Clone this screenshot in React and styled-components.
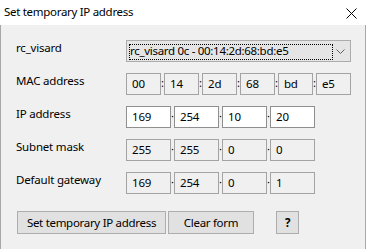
import React from "react";
import styled, { createGlobalStyle } from "styled-components";

const FONT = `"Noto Sans", "Open Sans", sans-serif`;

const Global = createGlobalStyle`
  html, body { margin: 0; padding: 0; background: #fff; }
  body { font-family: ${FONT}; font-size: 11.5px; color: #000; }
  * { box-sizing: border-box; }
`;

const Window = styled.div`
  width: 367px;
  height: 249px;
  background: #fff;
  display: flex;
  flex-direction: column;
  overflow: hidden;
`;

const TitleBar = styled.div`
  height: 25px;
  flex: none;
  display: flex;
  align-items: center;
  justify-content: space-between;
  padding: 0 10px 0 4px;
  background: #fff;
`;

const Title = styled.div`
  font-size: 11.5px;
  line-height: 16px;
  margin-top: -1px;
  letter-spacing: -0.3px;
`;

const CloseBtn = styled.div`
  width: 12px;
  height: 12px;
  display: flex;
  align-items: center;
  justify-content: center;
  margin-top: 1px;
`;

const Body = styled.div`
  flex: 1;
  width: 366px;
  background: #f0f0f0;
  border-left: 1px solid #a7a7a7;
  border-right: 1px solid #a7a7a7;
  padding: 15px 0 0 15px;
`;

const Form = styled.div`
  display: grid;
  grid-template-columns: 110px auto;
  row-gap: 11px;
  align-items: center;
`;

const Label = styled.div`
  font-size: 11.5px;
  line-height: 16px;
  margin-top: -6px;
  letter-spacing: -0.2px;
`;

const Select = styled.div`
  position: relative;
  width: 225px;
  height: 22px;
  background: #e5e5e5;
  border: 1px solid #acacac;
  display: flex;
  align-items: center;
`;

const Focus = styled.div`
  position: absolute;
  left: 2px;
  top: 3px;
  width: 204px;
  height: 16px;
  border: 1px dotted #000;
`;

const SelectText = styled.span`
  padding-left: 3px;
  font-size: 11.5px;
  letter-spacing: -0.3px;
  line-height: 16px;
`;

const Chevron = styled.svg`
  position: absolute;
  right: 5px;
  top: 8px;
`;

const Fields = styled.div`
  display: flex;
  align-items: center;
`;

const Box = styled.div`
  width: ${(p) => p.$w}px;
  height: 22px;
  border: 1px solid ${(p) => (p.$editable ? "#8f8f8f" : "#a3a3a3")};
  background: ${(p) => (p.$editable ? "#fff" : "#f0f0f0")};
  padding-left: 5px;
  display: flex;
  align-items: center;
  font-size: 11.5px;
  letter-spacing: -0.2px;
  line-height: 16px;
`;

const Sep = styled.div`
  width: 3px;
  height: 22px;
  display: flex;
  align-items: center;
  justify-content: center;
  font-size: 11px;
  line-height: 12px;
  overflow: visible;
  margin-top: -2px;
`;

const Buttons = styled.div`
  display: flex;
  align-items: center;
  margin-top: 17px;
  padding-left: 1px;
`;

const Button = styled.button`
  height: 23px;
  width: ${(p) => p.$w}px;
  margin-left: ${(p) => p.$ml || 0}px;
  background: #e1e1e1;
  border: 1px solid #adadad;
  font-family: ${FONT};
  font-size: 11.5px;
  font-weight: ${(p) => (p.$bold ? 700 : 400)};
  letter-spacing: -0.3px;
  color: #000;
  padding: 0;
  line-height: 16px;
`;

function Group({ values, width, sep, editable }) {
  const out = [];
  values.forEach((v, i) => {
    if (i > 0) out.push(<Sep key={"s" + i}>{sep}</Sep>);
    out.push(
      <Box key={i} $w={width} $editable={editable}>
        {v}
      </Box>
    );
  });
  return <Fields>{out}</Fields>;
}

export default function App() {
  return (
    <>
      <Global />
      <Window>
        <TitleBar>
          <Title>Set temporary IP address</Title>
          <CloseBtn>
            <svg width="11" height="11" viewBox="0 0 11 11">
              <path d="M0.5 0.5 L10.5 10.5 M10.5 0.5 L0.5 10.5" stroke="#000" strokeWidth="1" />
            </svg>
          </CloseBtn>
        </TitleBar>
        <Body>
          <Form>
            <Label>rc_visard</Label>
            <Select>
              <Focus />
              <SelectText>rc_visard 0c - 00:14:2d:68:bd:e5</SelectText>
              <Chevron width="9" height="5" viewBox="0 0 9 5">
                <path d="M0.5 0.5 L4.5 4.5 L8.5 0.5" fill="none" stroke="#606060" strokeWidth="1" />
              </Chevron>
            </Select>

            <Label>MAC address</Label>
            <Group values={["00", "14", "2d", "68", "bd", "e5"]} width={35} sep=":" />

            <Label>IP address</Label>
            <Group values={["169", "254", "10", "20"]} width={45} sep="·" editable />

            <Label>Subnet mask</Label>
            <Group values={["255", "255", "0", "0"]} width={45} sep="·" />

            <Label>Default gateway</Label>
            <Group values={["169", "254", "0", "1"]} width={45} sep="·" />
          </Form>
          <Buttons>
            <Button $w={149}>Set temporary IP address</Button>
            <Button $w={86} $ml={2}>Clear form</Button>
            <Button $w={23} $ml={22} $bold>?</Button>
          </Buttons>
        </Body>
      </Window>
    </>
  );
}
